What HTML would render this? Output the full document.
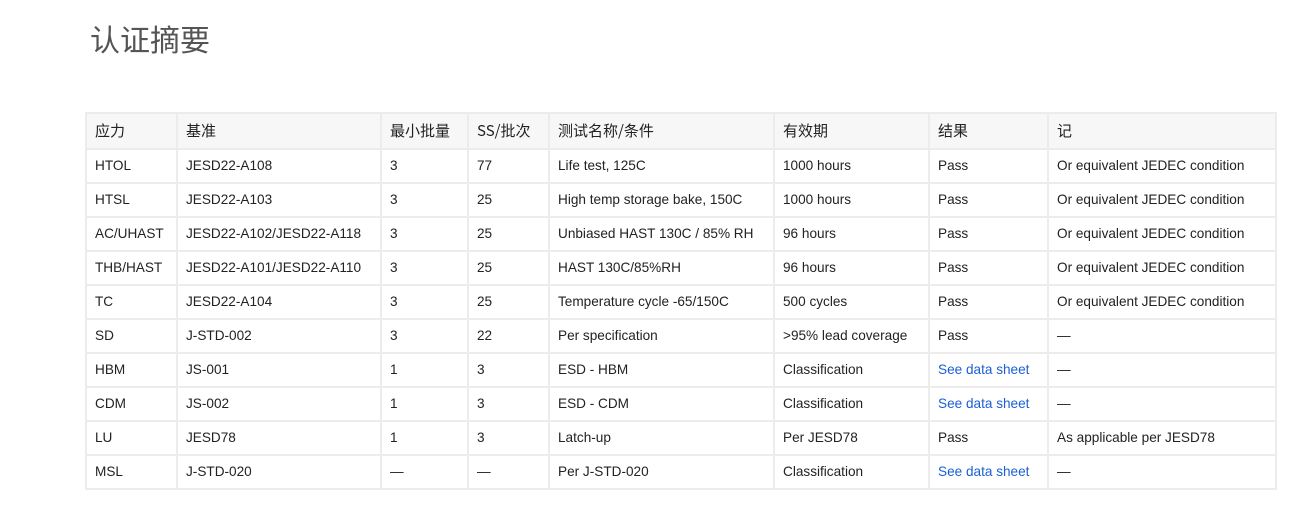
<!DOCTYPE html><html><head><meta charset="utf-8"><style>
body{margin:0;background:#fff;font-family:"Liberation Sans","Noto Sans CJK SC",sans-serif;color:#222;}
h1{position:absolute;left:90px;top:16px;margin:0;font-weight:400;font-size:30px;color:#555;font-family:"Noto Sans CJK SC",sans-serif;}
table{position:absolute;left:85px;top:112px;border-collapse:collapse;font-size:13.6px;table-layout:fixed;width:1190px;}
td,th{border:2px solid #ececec;padding:0 0 2px 8px;height:30px;text-align:left;font-weight:400;white-space:nowrap;}
th{background:#f7f7f7;height:32px;font-size:15px;font-family:"Noto Sans CJK SC",sans-serif;}
a{color:#1a5fd6;text-decoration:none;}
</style></head><body>
<h1>认证摘要</h1>
<table>
<colgroup><col style="width:91px"><col style="width:204px"><col style="width:87px"><col style="width:81px"><col style="width:225px"><col style="width:155px"><col style="width:119px"><col style="width:228px"></colgroup>
<tr><th>应力</th><th>基准</th><th>最小批量</th><th>SS/批次</th><th>测试名称/条件</th><th>有效期</th><th>结果</th><th>记</th></tr>
<tr><td>HTOL</td><td>JESD22-A108</td><td>3</td><td>77</td><td>Life test, 125C</td><td>1000 hours</td><td>Pass</td><td>Or equivalent JEDEC condition</td></tr>
<tr><td>HTSL</td><td>JESD22-A103</td><td>3</td><td>25</td><td>High temp storage bake, 150C</td><td>1000 hours</td><td>Pass</td><td>Or equivalent JEDEC condition</td></tr>
<tr><td>AC/UHAST</td><td>JESD22-A102/JESD22-A118</td><td>3</td><td>25</td><td>Unbiased HAST 130C / 85% RH</td><td>96 hours</td><td>Pass</td><td>Or equivalent JEDEC condition</td></tr>
<tr><td>THB/HAST</td><td>JESD22-A101/JESD22-A110</td><td>3</td><td>25</td><td>HAST 130C/85%RH</td><td>96 hours</td><td>Pass</td><td>Or equivalent JEDEC condition</td></tr>
<tr><td>TC</td><td>JESD22-A104</td><td>3</td><td>25</td><td>Temperature cycle -65/150C</td><td>500 cycles</td><td>Pass</td><td>Or equivalent JEDEC condition</td></tr>
<tr><td>SD</td><td>J-STD-002</td><td>3</td><td>22</td><td>Per specification</td><td>&gt;95% lead coverage</td><td>Pass</td><td>—</td></tr>
<tr><td>HBM</td><td>JS-001</td><td>1</td><td>3</td><td>ESD - HBM</td><td>Classification</td><td><a>See data sheet</a></td><td>—</td></tr>
<tr><td>CDM</td><td>JS-002</td><td>1</td><td>3</td><td>ESD - CDM</td><td>Classification</td><td><a>See data sheet</a></td><td>—</td></tr>
<tr><td>LU</td><td>JESD78</td><td>1</td><td>3</td><td>Latch-up</td><td>Per JESD78</td><td>Pass</td><td>As applicable per JESD78</td></tr>
<tr><td>MSL</td><td>J-STD-020</td><td>—</td><td>—</td><td>Per J-STD-020</td><td>Classification</td><td><a>See data sheet</a></td><td>—</td></tr>
</table>
</body></html>
